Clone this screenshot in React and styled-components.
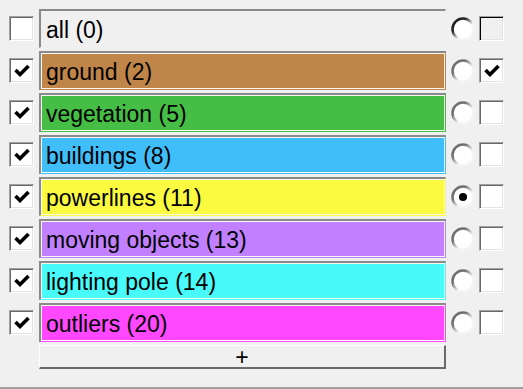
import React from "react";
import styled, { createGlobalStyle } from "styled-components";

const classes = [
  { name: "ground", id: 2, color: "#c08548", on: true },
  { name: "vegetation", id: 5, color: "#46be46", on: true },
  { name: "buildings", id: 8, color: "#40befa", on: true },
  { name: "powerlines", id: 11, color: "#fafa40", on: true, selected: true },
  { name: "moving objects", id: 13, color: "#c080ff", on: true },
  { name: "lighting pole", id: 14, color: "#48fafa", on: true },
  { name: "outliers", id: 20, color: "#ff48ff", on: true },
];

const GlobalStyle = createGlobalStyle`
  html, body {
    margin: 0;
    padding: 0;
    background: #f0f0f0;
    font-family: "Liberation Sans", Arial, sans-serif;
  }
`;

const Page = styled.div`
  width: 523px;
  height: 389px;
  display: flex;
  flex-direction: column;
  box-sizing: border-box;
  border-bottom: 2px solid #a0a0a0;
`;

const List = styled.div`
  display: flex;
  flex-direction: column;
  gap: 3px;
  padding: 9px 0 0 9px;
`;

const Row = styled.div`
  display: flex;
  align-items: center;
  height: 39px;
`;

const Check = styled.div`
  width: 25px;
  height: 25px;
  box-sizing: border-box;
  background: ${(p) => (p.$dim ? "#f0f0f0" : "#fff")};
  border-style: solid;
  border-width: 1px;
  border-color: #a0a0a0 #ffffff #ffffff #a0a0a0;
  box-shadow: inset 1px 1px 0 ${(p) => (p.$dim ? "#000" : "#696969")},
    inset -1px -1px 0 #e3e3e3;
  display: flex;
  align-items: center;
  justify-content: center;
  margin-right: ${(p) => p.$gap || 0}px;
`;

const LabelBox = styled.div`
  width: 407px;
  height: 39px;
  box-sizing: border-box;
  border-style: solid;
  border-width: 2px 1px 1px 2px;
  border-color: #8a8a8a ${(p) => p.$edge} ${(p) => p.$edge} #8a8a8a;
  margin-right: 5px;
  display: flex;
`;

const LabelFill = styled.div`
  flex: 1;
  border: 1px solid ${(p) => (p.$plain ? "#f0f0f0" : "#f8f8f0")};
  background: ${(p) => p.$color};
  font-size: 23px;
  color: #000;
  display: flex;
  align-items: center;
  padding: 2px 0 0 4px;
`;

const AddButton = styled.button`
  margin-left: 30px;
  width: 407px;
  height: 24px;
  box-sizing: border-box;
  background: #f0f0f0;
  border-style: solid;
  border-width: 1px 2px 2px 1px;
  border-color: #ffffff #6a6a6a #6a6a6a #ffffff;
  font-family: "Liberation Sans", Arial, sans-serif;
  font-size: 23px;
  line-height: 20px;
  padding: 0;
  color: #000;
`;

const RadioWrap = styled.div`
  width: 24px;
  height: 24px;
  margin-right: 4px;
  display: flex;
`;

function Tick() {
  return (
    <svg width="16" height="13" viewBox="0 0 16 13">
      <path d="M1.5 6 L6 10.5 L14.5 2" fill="none" stroke="#000" strokeWidth="3.6" />
    </svg>
  );
}

function Radio({ checked, dark }) {
  const id = dark ? "rgd" : "rg";
  return (
    <RadioWrap>
      <svg width="24" height="24" viewBox="0 0 24 24">
        <defs>
          <linearGradient id={id} x1="0" y1="0" x2="1" y2="1">
            <stop offset="0.3" stopColor={dark ? "#202020" : "#707070"} />
            <stop offset="0.6" stopColor="#f4f4f4" />
          </linearGradient>
        </defs>
        <circle cx="12" cy="12" r="10.5" fill="#fff" stroke={`url(#${id})`} strokeWidth="2.5" />
        {checked && <circle cx="12" cy="12" r="4" fill="#000" />}
      </svg>
    </RadioWrap>
  );
}

export default function App() {
  return (
    <Page>
      <GlobalStyle />
      <List>
        <Row>
          <Check $gap={5} />
          <LabelBox $edge="#f0f0f0">
            <LabelFill $color="#f0f0f0" $plain>all (0)</LabelFill>
          </LabelBox>
          <Radio dark />
          <Check $dim />
        </Row>
        {classes.map((c) => (
          <Row key={c.id}>
            <Check $gap={5}>{c.on && <Tick />}</Check>
            <LabelBox $edge={c.color}>
              <LabelFill $color={c.color}>
                {c.name} ({c.id})
              </LabelFill>
            </LabelBox>
            <Radio checked={c.selected} />
            <Check>{c.id === 2 && <Tick />}</Check>
          </Row>
        ))}
        <AddButton>+</AddButton>
      </List>
    </Page>
  );
}
